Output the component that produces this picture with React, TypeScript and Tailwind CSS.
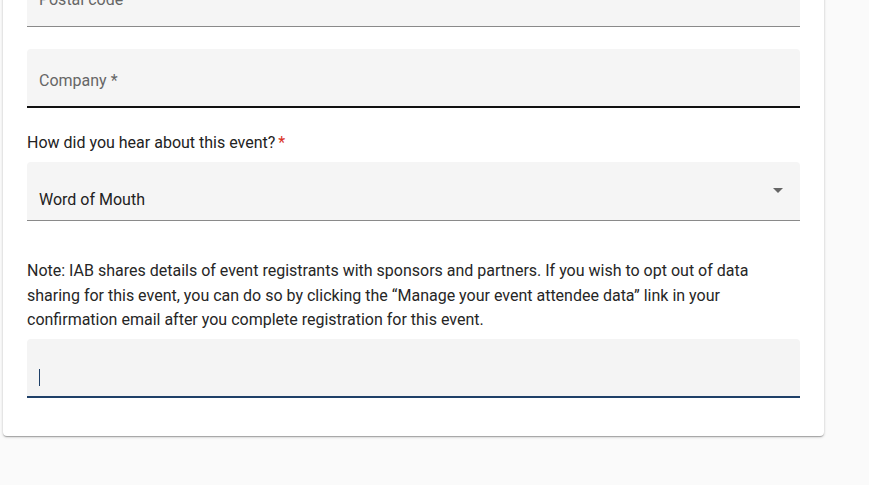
import React from 'react';

const font = { fontFamily: 'Roboto, "Noto Sans", sans-serif' };

const App: React.FC = () => {
  return (
    <div className="min-h-[485px] bg-[#fafafa] overflow-hidden" style={font}>
      <div className="-mt-[30px] ml-[3px] w-[821px] bg-white rounded-b-[4px] shadow-[0_1px_3px_rgba(0,0,0,0.2),0_1px_1px_rgba(0,0,0,0.14),0_2px_1px_-1px_rgba(0,0,0,0.12)] px-6 pb-[38px]">
        {/* Postal code */}
        <div className="h-[57px] bg-[#f5f5f5] rounded-t-[4px] border-b border-[#8a8a8a] flex items-center px-3">
          <span className="text-[16px] text-[#666] mt-[4px]">Postal code</span>
        </div>

        {/* Company */}
        <div className="mt-[22px] h-[59px] bg-[#f5f5f5] rounded-t-[4px] border-b-2 border-[#111] flex items-center px-3">
          <span className="text-[16px] text-[#666] mt-[6px]">Company *</span>
        </div>

        <p className="mt-[25px] text-[16px] text-[#222] leading-[20px]">
          How did you hear about this event?<span className="text-[#d93025] ml-[3px]">*</span>
        </p>

        {/* Select */}
        <div className="mt-[9px] h-[59px] bg-[#f5f5f5] rounded-t-[4px] border-b border-[#8a8a8a] flex items-end justify-between px-3 pb-[8px] relative">
          <span className="text-[16px] text-[#222]">Word of Mouth</span>
          <svg width="10" height="5" viewBox="0 0 10 5" className="absolute right-[17px] top-[26px]">
            <path d="M0 0 L10 0 L5 5 Z" fill="#666" />
          </svg>
        </div>

        <p className="mt-[38px] text-[16px] text-[#262626] leading-[24.5px]">
          Note: IAB shares details of event registrants with sponsors and partners. If you wish to opt out of data sharing for this event, you can do so by clicking the “Manage your event attendee data” link in your confirmation email after you complete registration for this event.
        </p>

        {/* Focused text field */}
        <div className="mt-[6px] h-[59px] bg-[#f4f4f4] rounded-t-[4px] border-b-2 border-[#1f4068] flex items-end px-3 pb-[10px]">
          <span className="w-px h-[17px] bg-[#1f4068]" />
        </div>
      </div>
    </div>
  );
};

export default App;
